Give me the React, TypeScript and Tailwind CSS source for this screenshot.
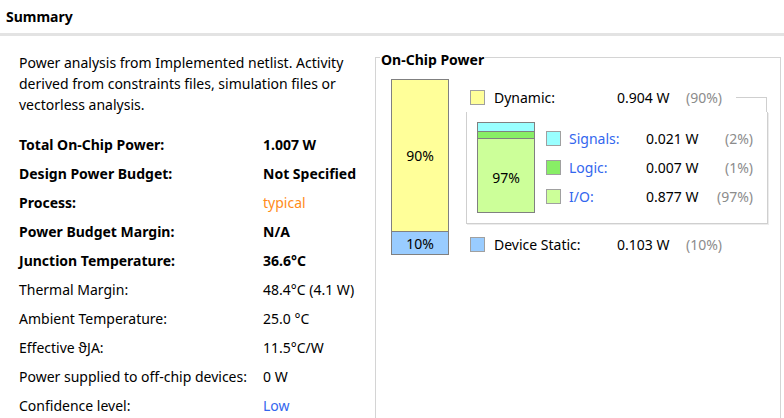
const font = { fontFamily: '"Noto Sans", "Open Sans", sans-serif' };

type Row = { label: string; value: string; bold?: boolean; tone?: 'orange' | 'blue' };

const rows: Row[] = [
  { label: 'Total On-Chip Power:', value: '1.007 W', bold: true },
  { label: 'Design Power Budget:', value: 'Not Specified', bold: true },
  { label: 'Process:', value: 'typical', bold: true, tone: 'orange' },
  { label: 'Power Budget Margin:', value: 'N/A', bold: true },
  { label: 'Junction Temperature:', value: '36.6°C', bold: true },
  { label: 'Thermal Margin:', value: '48.4°C (4.1 W)' },
  { label: 'Ambient Temperature:', value: '25.0 °C' },
  { label: 'Effective ϑJA:', value: '11.5°C/W' },
  { label: 'Power supplied to off-chip devices:', value: '0 W' },
  { label: 'Confidence level:', value: 'Low', tone: 'blue' },
];

function Swatch({ color }: { color: string }) {
  return <div className={`w-[15px] h-[15px] border border-[#a0a0a0] shrink-0 ${color}`} />;
}

function SubRow({ color, label, value, pct }: { color: string; label: string; value: string; pct: string }) {
  return (
    <div className="flex items-center h-[29px]">
      <Swatch color={color} />
      <span className="ml-[8px] w-[77px] text-[#3366ee]">{label}</span>
      <span className="w-[70px]">{value}</span>
      <span className="flex-1 text-right text-[#8c8c8c]">{pct}</span>
    </div>
  );
}

export default function App() {
  return (
    <div className="w-[784px] h-[418px] overflow-hidden bg-white text-[14px] text-black" style={font}>
      <div className="h-[33px] flex items-center pl-[6px] font-bold">Summary</div>
      <div className="h-[3px] bg-[#e3e3e3]" />

      <div className="flex">
        <div className="w-[375px] pl-[19px] pt-[16px]">
          <p className="leading-[21px] w-[340px]">
            Power analysis from Implemented netlist. Activity derived from constraints files, simulation files or
            vectorless analysis.
          </p>
          <div className="mt-[15px]">
            {rows.map((r) => (
              <div key={r.label} className="flex items-center h-[29px]">
                <span className={`w-[244px] ${r.bold ? 'font-bold' : ''}`}>{r.label}</span>
                <span
                  className={`${r.bold && !r.tone ? 'font-bold' : ''} ${
                    r.tone === 'orange' ? 'text-[#ff8c1a]' : r.tone === 'blue' ? 'text-[#3366ee]' : ''
                  }`}
                >
                  {r.value}
                </span>
              </div>
            ))}
          </div>
        </div>

        <div className="relative mt-[21px] w-[406px] h-[400px] border border-[#d4d4d4]">
          <span className="absolute left-[4px] top-[-8px] bg-white px-[1px] font-bold leading-[20px]">
            On-Chip Power
          </span>

          <div className="flex items-start pl-[15px] pt-[21px]">
            <div className="w-[58px] border border-[#808080] flex flex-col shrink-0">
              <div className="h-[151px] bg-[#ffff99] flex items-center justify-center">90%</div>
              <div className="h-[23px] bg-[#99ccff] border-t border-[#808080] flex items-center justify-center">10%</div>
            </div>

            <div className="ml-[17px] pt-[4px] w-[302px]">
              <div className="flex items-center h-[29px]">
                <div className="pl-[4px]">
                  <Swatch color="bg-[#ffff99]" />
                </div>
                <span className="ml-[9px] w-[123px]">Dynamic:</span>
                <span className="w-[69px]">0.904 W</span>
                <span className="w-[50px] text-[#8c8c8c]">(90%)</span>
                <div className="self-end w-[31px] h-[15px] border-t border-r border-[#cfcfcf]" />
              </div>

              <div className="flex h-[112px] border-l border-r border-b border-[#cfcfcf] shadow-[1px_1px_0_#ececec] pl-[10px] pr-[14px]">
                <div className="mt-[10px] w-[58px] h-[91px] border border-[#808080] flex flex-col shrink-0">
                  <div className="h-[8px] bg-[#99ffff]" />
                  <div className="h-[7px] bg-[#88ee66] border-t border-[#808080]" />
                  <div className="flex-1 bg-[#ccff99] border-t border-[#808080] flex items-center justify-center pt-[3px]">97%</div>
                </div>
                <div className="ml-[11px] pt-[12px] flex-1">
                  <SubRow color="bg-[#99ffff]" label="Signals:" value="0.021 W" pct="(2%)" />
                  <SubRow color="bg-[#88ee66]" label="Logic:" value="0.007 W" pct="(1%)" />
                  <SubRow color="bg-[#ccff99]" label="I/O:" value="0.877 W" pct="(97%)" />
                </div>
              </div>

              <div className="flex items-center h-[29px] mt-[6px]">
                <div className="pl-[4px]">
                  <Swatch color="bg-[#99ccff]" />
                </div>
                <span className="ml-[9px] w-[123px]">Device Static:</span>
                <span className="w-[69px]">0.103 W</span>
                <span className="text-[#8c8c8c]">(10%)</span>
              </div>
            </div>
          </div>
        </div>
      </div>
    </div>
  );
}
